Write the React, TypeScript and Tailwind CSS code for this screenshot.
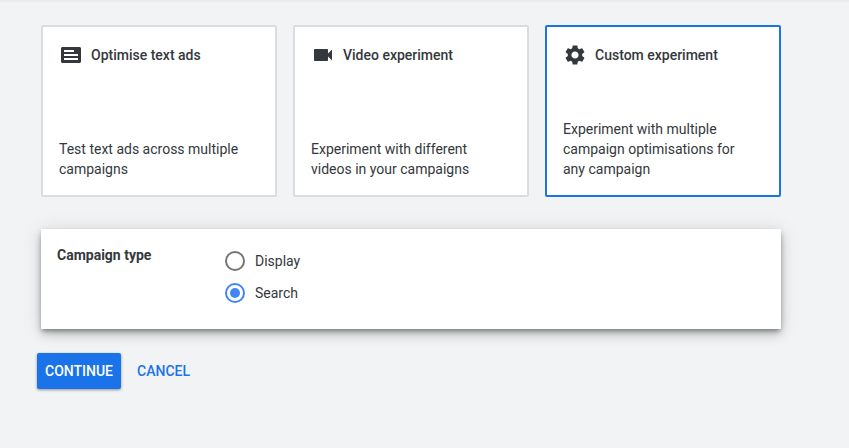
import { useState } from 'react';
import type { ReactNode } from 'react';
import clsx from 'clsx';
import { MdSettings, MdVideocam } from 'react-icons/md';

interface ExperimentCardProps {
  title: string;
  description: string;
  icon: ReactNode;
  selected: boolean;
  onSelect: () => void;
}

function TextAdIcon() {
  return (
    <svg viewBox="0 0 24 24" className="size-6" fill="currentColor" aria-hidden="true">
      <path
        fillRule="evenodd"
        d="M3.5 4h17c.83 0 1.5.67 1.5 1.5v13c0 .83-.67 1.5-1.5 1.5h-17C2.67 20 2 19.33 2 18.5v-13C2 4.67 2.67 4 3.5 4zM5 7v2h10V7H5zm0 4v2h14v-2H5zm0 4v2h14v-2H5z"
      />
    </svg>
  );
}

function ExperimentCard({ title, description, icon, selected, onSelect }: ExperimentCardProps) {
  return (
    <button
      type="button"
      aria-pressed={selected}
      onClick={onSelect}
      className={clsx(
        'flex min-h-[172px] cursor-pointer flex-col justify-between rounded-xs border-2 bg-white p-4 text-left',
        selected ? 'border-[#1a73e8]' : 'border-[#dadce0]',
      )}
    >
      <span className="flex items-center gap-2 font-medium">
        {icon}
        {title}
      </span>
      <span className="pr-4">{description}</span>
    </button>
  );
}

const EXPERIMENTS = [
  {
    id: 'text',
    title: 'Optimise text ads',
    description: 'Test text ads across multiple campaigns',
    icon: <TextAdIcon />,
  },
  {
    id: 'video',
    title: 'Video experiment',
    description: 'Experiment with different videos in your campaigns',
    icon: <MdVideocam className="size-6" />,
  },
  {
    id: 'custom',
    title: 'Custom experiment',
    description: 'Experiment with multiple campaign optimisations for any campaign',
    icon: <MdSettings className="size-6" />,
  },
];

const CAMPAIGN_TYPES = ['Display', 'Search'];

export default function App() {
  const [experiment, setExperiment] = useState('custom');
  const [campaignType, setCampaignType] = useState('Search');

  return (
    <main className="min-h-screen border-t-2 border-[#ebecee] bg-[#f1f3f4] pt-[23px] pr-[68px] pb-10 pl-[41px] font-[Roboto,sans-serif] text-sm leading-5 text-[#34383c]">
      <div className="grid grid-cols-3 gap-4">
        {EXPERIMENTS.map(({ id, ...card }) => (
          <ExperimentCard key={id} {...card} selected={experiment === id} onSelect={() => setExperiment(id)} />
        ))}
      </div>

      {/* Campaign type */}
      <section
        role="radiogroup"
        aria-labelledby="campaign-type"
        className="mt-8 flex bg-white px-4 pt-4 pb-5 shadow-[0_6px_10px_rgba(0,0,0,0.14),0_1px_18px_rgba(0,0,0,0.12),0_3px_5px_-1px_rgba(0,0,0,0.4)]"
      >
        <h2 id="campaign-type" className="w-[168px] shrink-0 font-bold">Campaign type</h2>
        <div className="flex flex-col">
          {CAMPAIGN_TYPES.map((type) => (
            <label key={type} className="flex h-8 cursor-pointer items-center gap-2.5">
              <input
                type="radio"
                name="campaignType"
                value={type}
                checked={campaignType === type}
                onChange={() => setCampaignType(type)}
                className="grid size-5 appearance-none place-content-center rounded-full border-2 border-[#757575] before:hidden before:size-[10px] before:rounded-full before:bg-[#4285f4] checked:border-[#4285f4] checked:before:block"
              />
              {type}
            </label>
          ))}
        </div>
      </section>

      {/* Actions */}
      <div className="mt-6 -ml-1 flex gap-2 font-medium">
        <button type="button" className="h-9 cursor-pointer rounded-xs bg-[#1a73e8] px-2 text-white shadow-[0_1px_3px_rgba(0,0,0,0.4)]">
          CONTINUE
        </button>
        <button type="button" className="h-9 cursor-pointer px-2 text-[#1a73e8]">
          CANCEL
        </button>
      </div>
    </main>
  );
}
